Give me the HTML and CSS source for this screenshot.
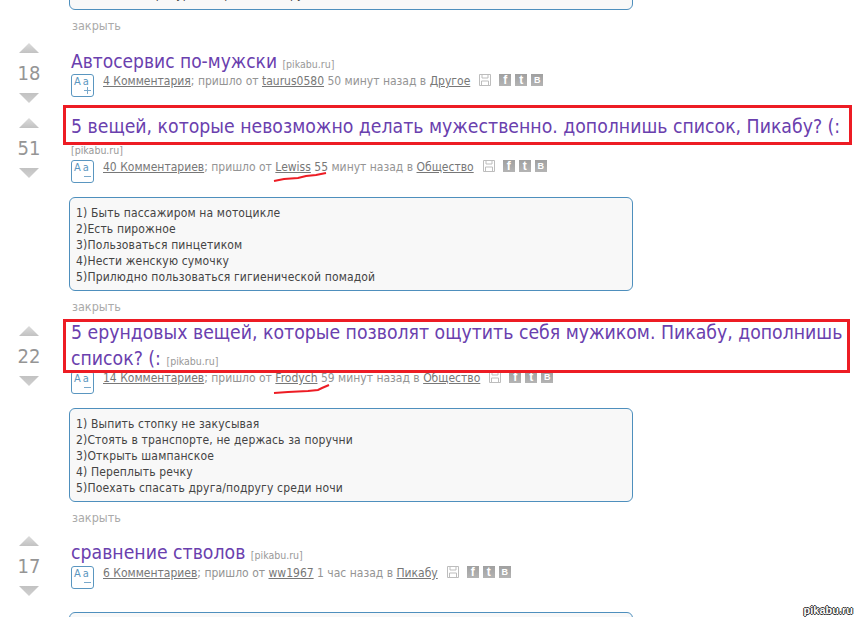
FILE: index.html
```html
<!DOCTYPE html>
<html lang="ru">
<head>
<meta charset="utf-8">
<title>Пикабу</title>
<link rel="stylesheet" href="styles.css">
</head>
<body>
<div class="page">
  <div class="body-block first">
    <div class="box"><p>1) Выпить, перекурить, проводить друга</p></div>
    <a class="close">закрыть</a>
  </div>

  <article class="story s1">
    <div class="vote"><i class="up"></i><b class="num">18</b><i class="down"></i></div>
    <div class="content">
      <h2 class="title">Автосервис по-мужски <span class="src">[pikabu.ru]</span></h2>
      <div class="meta">
        <span class="aa plus"><span class="aa-t">Aa</span></span>
        <p class="info"><a>4 Комментария</a>; пришло от <a>taurus0580</a> 50 минут назад в <a>Другое</a></p>
        <span class="icons">
          <svg class="save" viewBox="0 0 12 12"><path d="M.5.5h11v11H.5zM3 .5v3.5h6V.5M2.5 11.5V7h7v4.5"/></svg>
          <span class="soc">f</span><span class="soc">t</span><span class="soc soc-b">B</span>
        </span>
      </div>
    </div>
  </article>

  <article class="story s2">
    <div class="vote"><i class="up"></i><b class="num">51</b><i class="down"></i></div>
    <div class="content">
      <h2 class="title">5 вещей, которые невозможно делать мужественно. дополнишь список, Пикабу? (: <span class="src own">[pikabu.ru]</span></h2>
      <div class="meta">
        <span class="aa"><span class="aa-t">Aa</span></span>
        <p class="info"><a>40 Комментариев</a>; пришло от <a>Lewiss</a> <span class="dark">55</span> минут назад в <a>Общество</a></p>
        <span class="icons">
          <svg class="save" viewBox="0 0 12 12"><path d="M.5.5h11v11H.5zM3 .5v3.5h6V.5M2.5 11.5V7h7v4.5"/></svg>
          <span class="soc">f</span><span class="soc">t</span><span class="soc soc-b">B</span>
        </span>
      </div>
      <div class="body-block">
        <div class="box">
          <p>1) Быть пассажиром на мотоцикле</p>
          <p>2)Есть пирожное</p>
          <p>3)Пользоваться пинцетиком</p>
          <p>4)Нести женскую сумочку</p>
          <p>5)Прилюдно пользоваться гигиенической помадой</p>
        </div>
        <a class="close">закрыть</a>
      </div>
    </div>
  </article>

  <article class="story s3">
    <div class="vote"><i class="up"></i><b class="num">22</b><i class="down"></i></div>
    <div class="content">
      <h2 class="title">5 ерундовых вещей, которые позволят ощутить себя мужиком. Пикабу, дополнишь список? (: <span class="src">[pikabu.ru]</span></h2>
      <div class="meta">
        <span class="aa"><span class="aa-t">Aa</span></span>
        <p class="info"><a>14 Комментариев</a>; пришло от <a>Frodych</a> 59 минут назад в <a>Общество</a></p>
        <span class="icons">
          <svg class="save" viewBox="0 0 12 12"><path d="M.5.5h11v11H.5zM3 .5v3.5h6V.5M2.5 11.5V7h7v4.5"/></svg>
          <span class="soc">f</span><span class="soc">t</span><span class="soc soc-b">B</span>
        </span>
      </div>
      <div class="body-block">
        <div class="box">
          <p>1) Выпить стопку не закусывая</p>
          <p>2)Стоять в транспорте, не держась за поручни</p>
          <p>3)Открыть шампанское</p>
          <p>4) Переплыть речку</p>
          <p>5)Поехать спасать друга/подругу среди ночи</p>
        </div>
        <a class="close">закрыть</a>
      </div>
    </div>
  </article>

  <article class="story s4">
    <div class="vote"><i class="up"></i><b class="num">17</b><i class="down"></i></div>
    <div class="content">
      <h2 class="title">сравнение стволов <span class="src">[pikabu.ru]</span></h2>
      <div class="meta">
        <span class="aa"><span class="aa-t">Aa</span></span>
        <p class="info"><a>6 Комментариев</a>; пришло от <a>ww1967</a> 1 час назад в <a>Пикабу</a></p>
        <span class="icons">
          <svg class="save" viewBox="0 0 12 12"><path d="M.5.5h11v11H.5zM3 .5v3.5h6V.5M2.5 11.5V7h7v4.5"/></svg>
          <span class="soc">f</span><span class="soc">t</span><span class="soc soc-b">B</span>
        </span>
      </div>
      <div class="body-block"><div class="box box-empty"></div></div>
    </div>
  </article>
</div>

<div class="mark mark-a"></div>
<div class="mark mark-b"></div>
<svg class="scribble" viewBox="0 0 854 617">
  <path d="M274 181l10-2 14-1 8-2 10-1 10-2"/>
  <path d="M274 393l14-1 20-1 10-1 4-2 7-3"/>
</svg>
<span class="watermark">pikabu.ru</span>
</body>
</html>
```
FILE: styles.css
```css
html, body {
  margin: 0;
  padding: 0;
  height: 617px;
  overflow: hidden;
  background: #fff;
}
body {
  position: relative;
  font-family: "DejaVu Sans Condensed", "DejaVu Sans", sans-serif;
  color: #949494;
}
p, h2 { margin: 0; }
.page { padding-left: 18px; height: 617px; overflow: hidden; }

.story {
  display: flex;
  gap: 31px;
}
.vote {
  flex: none;
  width: 22px;
  display: flex;
  flex-direction: column;
  align-items: center;
}
.up, .down {
  display: block;
  width: 20px;
  height: 10px;
}
.up {
  background: linear-gradient(#dcdcdc, #c2c2c2);
  clip-path: polygon(50% 0, 100% 100%, 0 100%);
}
.down {
  background: linear-gradient(#c2c2c2, #d0d0d0);
  clip-path: polygon(0 0, 100% 0, 50% 100%);
}
.num {
  font-weight: normal;
  font-size: 20px;
  line-height: 24px;
  margin: 8px 0;
  color: #959595;
}
.content { flex: 1; min-width: 0; width: 775px; }
.title {
  font-weight: normal;
  font-size: 19.25px;
  line-height: 26px;
  color: #6a40ae;
}
.s1 .title { font-size: 19px; }
.src { font-size: 10.5px; line-height: 1; color: #999; }
.src.own { display: block; line-height: 20px; }

.meta {
  display: flex;
  align-items: flex-start;
  font-size: 12px;
  line-height: 14px;
}
.aa {
  flex: none;
  position: relative;
  box-sizing: border-box;
  width: 23px;
  height: 23px;
  margin-right: 9px;
  border: 1px solid #5a96c0;
  border-radius: 3px;
  color: #5a96c0;
  font-size: 11px;
}
.aa-t { position: absolute; left: 2px; top: 1px; letter-spacing: 2px; line-height: 12px; }
.aa::before {
  content: "";
  position: absolute;
  right: 2px;
  bottom: 5px;
  width: 7px;
  height: 1px;
  background: #7aa9cb;
}
.plus::after {
  content: "";
  position: absolute;
  right: 5px;
  bottom: 2px;
  width: 1px;
  height: 7px;
  background: #7aa9cb;
}
.info { white-space: nowrap; }
.info a { color: #777; text-decoration: underline; }
.dark { color: #777; }
.icons { display: flex; align-items: center; margin-left: 9px; }
.save {
  width: 12px;
  height: 12px;
  margin-right: 8px;
  fill: none;
  stroke: #bdbdbd;
  stroke-width: 1;
}
.soc {
  width: 12px;
  height: 12px;
  margin-right: 4px;
  background: linear-gradient(#a0a0a0, #b4b4b4);
  color: #fff;
  font: bold 12px/12px "Liberation Sans", sans-serif;
  text-align: center;
}
.soc-b { font-size: 9px; }

.body-block { margin-left: -2px; }
.body-block.first { margin: -20px 0 0 51px; }
.box {
  box-sizing: border-box;
  width: 564px;
  padding: 7px 6px 5px;
  background: #f8f8f8;
  border: 1px solid #4e8fbd;
  border-radius: 6px;
  color: #444;
  font-size: 12px;
  line-height: 16px;
  letter-spacing: .15px;
}
.box-empty { height: 40px; }
.first .box { height: 30px; padding-top: 5px; }
.close {
  display: block;
  margin: 8px 0 0 3px;
  font-size: 12.5px;
  line-height: 16px;
  color: #aaa;
}
.s2 .meta, .s3 .meta { margin-bottom: 14px; }

.s1 { margin-top: 9px; }
.s1 .content { padding-top: 5px; }
.s2 { margin-top: 11px; }
.s2 .vote { padding-top: 4px; }
.s3 { margin-top: 5px; }
.s3 .vote { padding-top: 6px; }
.s3 .meta { margin-top: -1px; }
.s4 { margin-top: 10px; }
.s4 .content { padding-top: 4px; }
.s4 .meta { margin-bottom: 23px; }

.mark {
  position: absolute;
  box-sizing: border-box;
  border: 3px solid #ed1c24;
}
.mark-a { left: 63px; top: 105px; width: 789px; height: 40px; }
.mark-b { left: 63px; top: 319px; width: 787px; height: 54px; }
.scribble {
  position: absolute;
  left: 0;
  top: 0;
  width: 854px;
  height: 617px;
  fill: none;
  stroke: #ed1c24;
  stroke-width: 2;
}
.watermark {
  position: absolute;
  right: 1px;
  bottom: 0;
  font: bold 11px/14px "Liberation Sans", sans-serif;
  color: #fff;
  text-shadow: 1px 0 #333, -1px 0 #333, 0 1px #333, 0 -1px #333;
}
```
